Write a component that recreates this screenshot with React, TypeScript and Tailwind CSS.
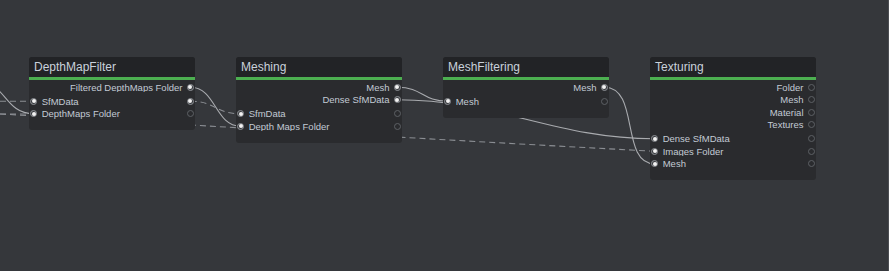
import clsx from "clsx";

type Port = { label: string; left?: boolean; right?: boolean; rightFilled?: boolean };

interface NodeSpec {
  title: string;
  x: number;
  outputs: Port[];
  inputs: Port[];
}

const NODES: NodeSpec[] = [
  {
    title: "DepthMapFilter",
    x: 29,
    outputs: [{ label: "Filtered DepthMaps Folder", rightFilled: true }],
    inputs: [
      { label: "SfMData", left: true, rightFilled: true },
      { label: "DepthMaps Folder", left: true },
    ],
  },
  {
    title: "Meshing",
    x: 236,
    outputs: [
      { label: "Mesh", rightFilled: true },
      { label: "Dense SfMData", rightFilled: true },
    ],
    inputs: [
      { label: "SfmData", left: true },
      { label: "Depth Maps Folder", left: true },
    ],
  },
  {
    title: "MeshFiltering",
    x: 443,
    outputs: [{ label: "Mesh", rightFilled: true }],
    inputs: [{ label: "Mesh", left: true }],
  },
  {
    title: "Texturing",
    x: 650,
    outputs: [
      { label: "Folder" },
      { label: "Mesh" },
      { label: "Material" },
      { label: "Textures" },
    ],
    inputs: [
      { label: "Dense SfMData", left: true },
      { label: "Images Folder", left: true },
      { label: "Mesh", left: true },
    ],
  },
];

const SOLID_EDGES = [
  "M -20 82 C 5 82, 5 113.75, 33.5 113.75",
  "M 190.5 87.25 C 216 87.25, 215 126.25, 240.5 126.25",
  "M 397.5 87.25 C 423 87.25, 422 101.25, 447.5 101.25",
  "M 397.5 99.75 C 497.5 99.75, 554.5 138.75, 654.5 138.75",
  "M 604.5 87.25 C 640 87.25, 620 163.75, 654.5 163.75",
];

const DASHED_EDGES = [
  "M 0 101.25 L 33.5 101.25",
  "M 0 114 L 33.5 114",
  "M 0 114 C 220 126.5, 440 140, 654.5 151.25",
  "M 190.5 101.25 C 216 101.25, 215 113.75, 240.5 113.75",
];

function Dot({ filled }: { filled?: boolean }) {
  return (
    <div
      className={clsx(
        "w-[7px] h-[7px] rounded-full border flex items-center justify-center flex-shrink-0",
        filled ? "border-[#8e9196] bg-[#3a3c40]" : "border-[#5d6065]"
      )}
    >
      {filled && <div className="w-[4px] h-[4px] rounded-full bg-[#f2f2f2]" />}
    </div>
  );
}

function Row({ port, output }: { port: Port; output?: boolean }) {
  return (
    <div className="flex items-center h-[12.5px] pl-[1px] pr-[1.5px]">
      <div className="w-[7px] flex-shrink-0">{port.left && <Dot filled />}</div>
      {output ? (
        <span className="flex-1 text-right mr-[4px] truncate">{port.label}</span>
      ) : (
        <span className="flex-1 ml-[4.7px] truncate">{port.label}</span>
      )}
      <Dot filled={port.rightFilled} />
    </div>
  );
}

function GraphNode({ node }: { node: NodeSpec }) {
  return (
    <div
      className="absolute top-[57px] w-[166px] rounded-[3px] bg-[#2a2b2e] overflow-hidden text-[9.5px] leading-none text-[#c2cad4]"
      style={{ left: node.x }}
    >
      <div className="h-[20px] bg-[#222326] flex items-center pl-[5px] text-[12px] text-[#c9d1db]">
        {node.title}
      </div>
      <div className="h-[3px] bg-[#4caf50]" />
      <div className="pt-[1px] pb-[10px]">
        {node.outputs.map((p, i) => (
          <Row key={"o" + i} port={p} output />
        ))}
        <div className="h-[1.5px]" />
        {node.inputs.map((p, i) => (
          <Row key={"i" + i} port={p} />
        ))}
      </div>
    </div>
  );
}

export default function App() {
  return (
    <div
      className="relative w-[889px] h-[271px] overflow-hidden bg-[#35373b] border-r border-[#4b4d52]"
      style={{ fontFamily: '"Liberation Sans", Arial, sans-serif' }}
    >
      {/* edges sit behind the nodes */}
      <svg className="absolute inset-0" width={889} height={271}>
        {SOLID_EDGES.map((d, i) => (
          <path key={i} d={d} fill="none" stroke="#a9abaf" strokeWidth={1.1} />
        ))}
        {DASHED_EDGES.map((d, i) => (
          <path
            key={i}
            d={d}
            fill="none"
            stroke="#8b8e93"
            strokeWidth={1.1}
            strokeDasharray="6 4"
          />
        ))}
      </svg>

      {NODES.map((n) => (
        <GraphNode key={n.title} node={n} />
      ))}
    </div>
  );
}
